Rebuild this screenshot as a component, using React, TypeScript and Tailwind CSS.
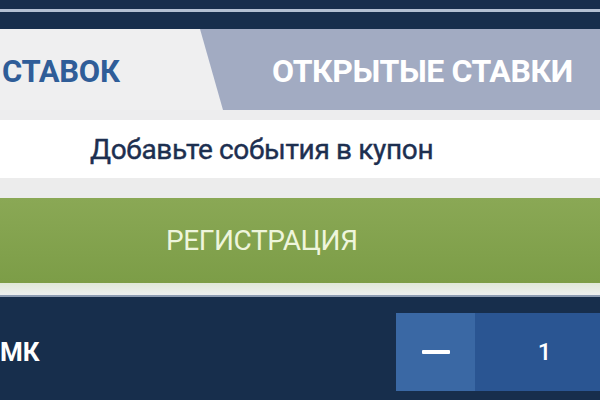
export default function App() {
  return (
    <div className="w-[600px] h-[400px] overflow-hidden flex flex-col bg-[#172e4c] font-['Roboto','Liberation_Sans',sans-serif]">
      {/* Top bar */}
      <div className="h-[9px] bg-[#172e4c]" />
      <div className="h-[3px] bg-[#b3c0d2]" />
      <div className="h-[17px] bg-[#172e4c]" />

      {/* Tabs */}
      <div className="h-[81px] flex bg-[#efeff0]">
        <div className="w-[200px] shrink-0 flex items-center pt-[3px] pl-[2px]">
          <span className="text-[31px] font-bold text-[#2f5d98] tracking-[-0.3px] leading-none">СТАВОК</span>
        </div>
        <div className="flex-1 flex items-center pt-[3px] pl-[72px] bg-[#a2abc2] [clip-path:polygon(0_0,100%_0,100%_100%,23px_100%)]">
          <span className="text-[32px] font-bold text-white tracking-[-0.4px] leading-none">ОТКРЫТЫЕ СТАВКИ</span>
        </div>
      </div>

      <div className="h-[10px] bg-[#ededee]" />
      <div className="h-[58px] bg-white flex items-center pl-[90px] pt-[2px]">
        <span className="text-[28px] text-[#1d2f50] tracking-[-0.35px] leading-none [-webkit-text-stroke:0.4px_#1d2f50]">Добавьте события в купон</span>
      </div>
      <div className="h-[20px] bg-[#ececec]" />

      {/* Register button */}
      <div className="h-[85px] bg-gradient-to-b from-[#8aa855] to-[#7c9d47] flex items-center pl-[166px]">
        <span className="text-[28px] text-[#eef5dc] tracking-[-0.4px] leading-none">РЕГИСТРАЦИЯ</span>
      </div>
      <div className="h-[12px] bg-gradient-to-b from-[#dfe8d8] to-[#eef0f0]" />
      <div className="h-[2px] bg-[#8d9db3]" />

      {/* Stake row */}
      <div className="flex-1 bg-[#172e4c] flex items-start pt-[16px]">
        <div className="flex-1 h-[78px] flex items-center">
          <span className="text-[26px] font-bold text-white leading-none">МК</span>
        </div>
        <div className="h-[78px] flex">
          <div className="w-[79px] bg-[#3a68a4] flex items-center justify-center">
            <div className="w-[28px] h-[4px] bg-white rounded-[1px]" />
          </div>
          <div className="w-[125px] bg-[#2a5592] flex items-center justify-center pl-[14px]">
            <span className="text-[24px] text-white font-medium leading-none">1</span>
          </div>
        </div>
      </div>
    </div>
  );
}
